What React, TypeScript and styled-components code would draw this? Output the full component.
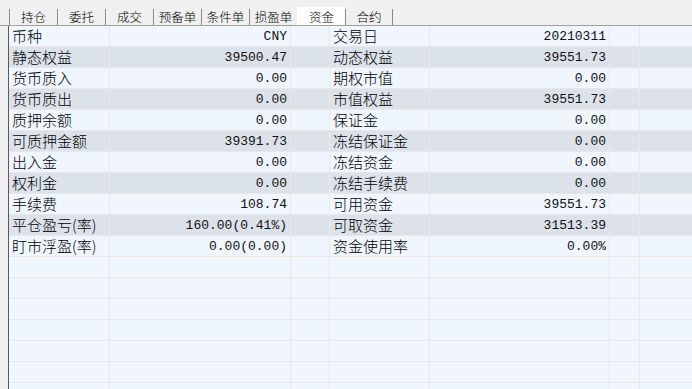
import React from "react";
import styled, { createGlobalStyle } from "styled-components";

const Global = createGlobalStyle`
  html, body { margin: 0; padding: 0; }
  body {
    background: #f0f0f0;
    width: 692px;
    height: 389px;
    overflow: hidden;
    font-family: "Noto Sans CJK SC", "Liberation Sans", sans-serif;
    color: #000;
  }
`;

const Screen = styled.div`
  display: flex;
  flex-direction: column;
  width: 692px;
  height: 389px;
  overflow: hidden;
`;

const TabBar = styled.div`
  display: flex;
  align-items: flex-end;
  height: 26px;
  padding-left: 9px;
  box-sizing: border-box;
  border-bottom: 1px solid #a0a0a0;
  flex: none;
`;

const Tab = styled.div<{ $active?: boolean; $last?: boolean }>`
  width: 48px;
  height: ${(p) => (p.$active ? 18 : 16)}px;
  box-sizing: border-box;
  display: flex;
  align-items: center;
  justify-content: center;
  font-size: 12.5px;
  font-weight: 300;
  line-height: 16px;
  background: ${(p) => (p.$active ? "#ffffff" : "transparent")};
  border-left: 1px solid ${(p) => (p.$active ? "#ffffff" : "#8a8a8a")};
  border-right: ${(p) => (p.$last ? "1px solid #8a8a8a" : "none")};
  padding-top: ${(p) => (p.$active ? 2 : 0)}px;
`;

const Panel = styled.div`
  flex: 1;
  margin-left: 8px;
  border-left: 1px solid #5a5a5a;
  overflow: hidden;
`;

const Row = styled.div<{ $shade: boolean }>`
  display: grid;
  grid-template-columns: 101px 181px 39px 100px 180px 30px 1fr;
  height: 21px;
  box-sizing: border-box;
  border-bottom: 1px solid #e8e8ea;
  background: ${(p) => (p.$shade ? "#dce2ea" : "#eff6fe")};
`;

const Cell = styled.div`
  box-sizing: border-box;
  border-right: 1px solid #e6e8ec;
  white-space: nowrap;
  overflow: hidden;
  line-height: 20px;
  &:last-child { border-right: none; }
`;

const Label = styled(Cell)`
  font-family: "Noto Sans CJK SC", sans-serif;
  font-size: 15px;
  font-weight: 300;
  padding-left: 3px;
  line-height: 19px;
`;

const Value = styled(Cell)`
  font-family: "Liberation Mono", monospace;
  font-size: 13px;
  text-align: right;
  padding-right: 3px;
  padding-top: 1px;
  color: #111;
`;

type Item = [string, string, string, string];

const data: Item[] = [
  ["币种", "CNY", "交易日", "20210311"],
  ["静态权益", "39500.47", "动态权益", "39551.73"],
  ["货币质入", "0.00", "期权市值", "0.00"],
  ["货币质出", "0.00", "市值权益", "39551.73"],
  ["质押余额", "0.00", "保证金", "0.00"],
  ["可质押金额", "39391.73", "冻结保证金", "0.00"],
  ["出入金", "0.00", "冻结资金", "0.00"],
  ["权利金", "0.00", "冻结手续费", "0.00"],
  ["手续费", "108.74", "可用资金", "39551.73"],
  ["平仓盈亏(率)", "160.00(0.41%)", "可取资金", "31513.39"],
  ["盯市浮盈(率)", "0.00(0.00)", "资金使用率", "0.00%"],
];

const tabs = ["持仓", "委托", "成交", "预备单", "条件单", "损盈单", "资金", "合约"];

export default function App() {
  const empty = 7;
  return (
    <Screen>
      <Global />
      <TabBar>
        {tabs.map((t, i) => (
          <Tab key={t} $active={t === "资金"} $last={i === tabs.length - 1}>
            {t}
          </Tab>
        ))}
      </TabBar>
      <Panel>
        {data.map((r, i) => (
          <Row key={i} $shade={i % 2 === 1}>
            <Label>{r[0]}</Label>
            <Value>{r[1]}</Value>
            <Cell />
            <Label>{r[2]}</Label>
            <Value>{r[3]}</Value>
            <Cell />
            <Cell />
          </Row>
        ))}
        {Array.from({ length: empty }).map((_, i) => (
          <Row key={"e" + i} $shade={false}>
            <Cell />
            <Cell />
            <Cell />
            <Cell />
            <Cell />
            <Cell />
            <Cell />
          </Row>
        ))}
      </Panel>
    </Screen>
  );
}
